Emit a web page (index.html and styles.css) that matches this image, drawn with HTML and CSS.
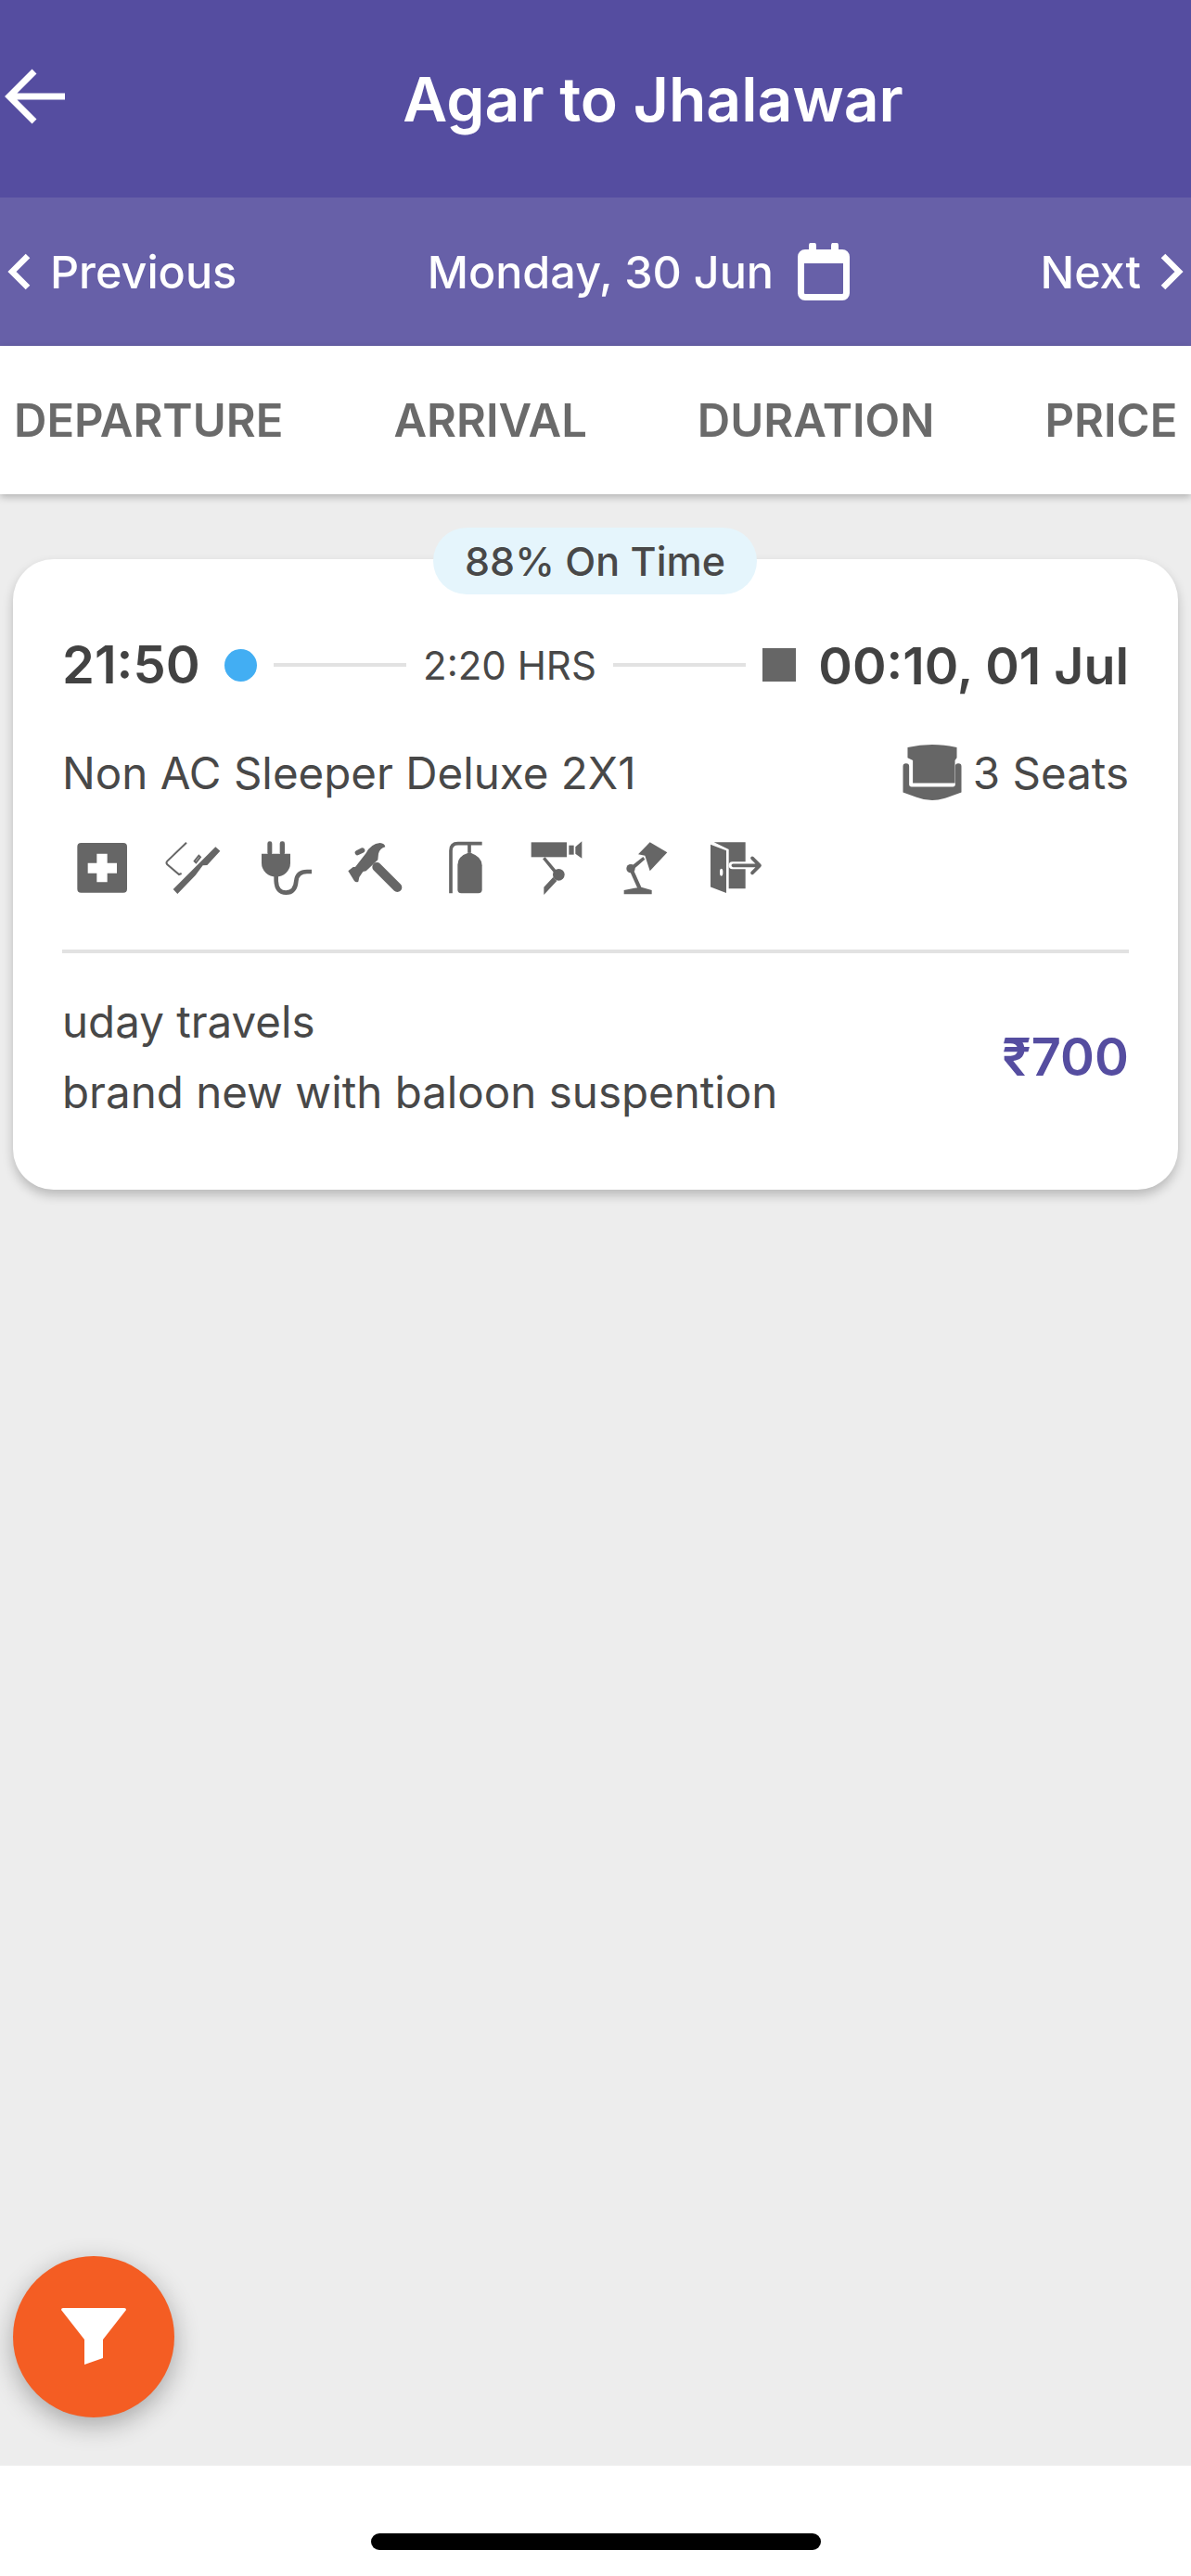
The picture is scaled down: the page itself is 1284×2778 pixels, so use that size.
FILE: index.html
```html
<!DOCTYPE html>
<html lang="en">
<head>
<meta charset="utf-8">
<title>Agar to Jhalawar</title>
<link rel="stylesheet" href="styles.css">
</head>
<body>
<div class="page">
  <header class="topbar">
    <svg class="back" viewBox="0 0 70 64"><path d="M34 5 7 32l27 27M8 32h59"/></svg>
    <h1 class="title">Agar to Jhalawar</h1>
  </header>
  <nav class="datebar">
    <a class="datebar-link"><svg class="chevron" viewBox="0 0 26 40"><path d="M22 3 5 20l17 17"/></svg>Previous</a>
    <span class="datebar-date">Monday, 30 Jun
      <svg class="calendar" viewBox="0 0 56 62"><path class="cal-fill" fill-rule="evenodd" d="M8 7h4V3a4 4 0 0 1 8 0v4h16V3a4 4 0 0 1 8 0v4h4a8 8 0 0 1 8 8v39a8 8 0 0 1-8 8H8a8 8 0 0 1-8-8V15a8 8 0 0 1 8-8Zm-1 15v32a1 1 0 0 0 1 1h40a1 1 0 0 0 1-1V22Z"/></svg>
    </span>
    <a class="datebar-link">Next<svg class="chevron" viewBox="0 0 26 40"><path d="M4 3l17 17L4 37"/></svg></a>
  </nav>
  <div class="tabs">
    <span class="tab">DEPARTURE</span>
    <span class="tab">ARRIVAL</span>
    <span class="tab">DURATION</span>
    <span class="tab">PRICE</span>
  </div>
  <main class="content">
    <article class="card">
      <span class="badge">88% On Time</span>
      <div class="times">
        <strong class="time time-dep">21:50</strong>
        <span class="dot"></span>
        <span class="line"></span>
        <span class="duration">2:20 HRS</span>
        <span class="line"></span>
        <span class="square"></span>
        <strong class="time">00:10, 01 Jul</strong>
      </div>
      <div class="bus-row">
        <span>Non AC Sleeper Deluxe 2X1</span>
        <span class="seats">
          <svg class="seat-icon" viewBox="100 68 190 187"><path d="M115 80q80-18 160 0v34l-6 8v74H132v-74l-17-8Z"/><path d="M100 142a10 10 0 0 1 20 0v58q0 8 8 8h134q8 0 8-8v-58a10 10 0 0 1 20 0v84l-44 16q-51 20-102 0l-44-16Z"/></svg>
          3 Seats
        </span>
      </div>
      <div class="amenities">
        <svg class="amenity" viewBox="58 78 180 180"><path fill-rule="evenodd" d="M80 87h137a12 12 0 0 1 12 12v137a12 12 0 0 1-12 12H80a12 12 0 0 1-12-12V99a12 12 0 0 1 12-12Zm51 35v30h-29v33h29v29h34v-29h31v-33h-31v-30Z"/></svg>
        <svg class="amenity" viewBox="352 78 180 180"><path d="M378 237 515 100l15 13-42 46-14 1-24 32-58 60Z"/><path d="M447 146l14-18 5 5-14 18ZM405 186l-8 3-38-32q-5-6 0-11l62-60" class="thin"/></svg>
        <svg class="amenity" viewBox="647 78 180 180"><rect x="684" y="82" width="15" height="44" rx="7"/><rect x="724" y="82" width="16" height="44" rx="7"/><path d="M665 122h93v30a46 44 0 0 1-93 0Z"/><path class="cord" d="M712 190v20q2 38 32 38 30 0 33-38 3-30 35-30h21"/></svg>
        <svg class="amenity" viewBox="938 78 180 180"><path class="handle" d="M1035 165l66 66"/><path d="M942 178l16-13h7l35-45q15-30 45-33 15 1 17 13-17 4-22 22l-2 20-38 36-10 2-12 18-3 14q-7 4-13-2Z"/><path class="cord thin-cord" d="M972 119l16-8"/></svg>
        <svg class="amenity" viewBox="32 78 180 180"><path d="M96 158q0-28 38-40 41 12 41 42v78q0 12-12 12h-55q-12 0-12-12Z"/><path class="neck" d="M74 250V112q0-23 23-23h78M134 89v30"/></svg>
        <svg class="amenity" viewBox="325 78 180 180"><rect x="333" y="85" width="115" height="48"/><rect x="455" y="95" width="16" height="30"/><path d="m476 100 21-18v55l-21-15Z"/><circle cx="422" cy="190" r="19"/><path d="m370 139 8-6 44 52-8 8ZM374 230l30-32 12 12-42 45Z"/></svg>
        <svg class="amenity" viewBox="624 78 180 180"><path d="m722 85 56 33-56 60-16-50-22-4Z"/><circle cx="660" cy="170" r="14"/><path d="m662 162 38-30 6 8-36 32ZM654 172l12-4 28 62-12 4Z"/><path d="M638 253v-13l34-7 22-3 34 10v13Z"/></svg>
        <svg class="amenity" viewBox="919 78 180 180"><path d="M930 85h102v150h-54V108Z"/><path fill-rule="evenodd" d="m918 92 52 20v137l-52-20Zm36 78q-5 0-5 8v8q0 8 5 8t5-8v-8q0-8-5-8Z"/><path class="arrow-gap" d="M990 160h44"/><path class="arrow" d="M992 160h82M1054 136l24 24-24 24"/></svg>
      </div>
      <hr class="divider">
      <div class="operator-row">
        <div class="operator">
          <p class="operator-line">uday travels</p>
          <p class="operator-line">brand new with baloon suspention</p>
        </div>
        <strong class="price">₹700</strong>
      </div>
    </article>
    <button class="fab" aria-label="Filter">
      <svg class="fab-icon" viewBox="0 0 70 62"><path d="M0 2Q0 0 2 0h66q2 0 2 2L45 34v20l-20 7V34Z"/></svg>
    </button>
  </main>
  <footer class="home-area"><span class="home-bar"></span></footer>
</div>
</body>
</html>
```
FILE: styles.css
```css
* { box-sizing: border-box; }
html, body { margin: 0; padding: 0; }
body { font-family: Inter, "Noto Sans", sans-serif; color: #484848; }
.page { display: flex; flex-direction: column; width: 1284px; height: 2778px; overflow: hidden; background: #ededed; }

.topbar { position: relative; flex: 0 0 213px; display: flex; align-items: center; justify-content: center; padding-left: 124px; background: #554da0; color: #fff; }
.back { position: absolute; left: 3px; top: 72px; width: 70px; height: 64px; fill: none; stroke: #fff; stroke-width: 7; }
.title { margin: 0; font-size: 66px; font-weight: 600; }

.datebar { flex: 0 0 160px; display: flex; align-items: center; justify-content: space-between; padding: 0 8px; background: #6760a8; color: #fff; font-size: 48.5px; font-weight: 500; }
.datebar-link { display: flex; align-items: center; gap: 20px; }
.datebar-date { display: flex; align-items: center; gap: 26px; }
.chevron { width: 26px; height: 40px; fill: none; stroke: #fff; stroke-width: 6.5; }
.calendar { width: 56px; height: 62px; }
.cal-fill { fill: #fff; }

.tabs { position: relative; z-index: 1; flex: 0 0 160px; display: flex; align-items: center; gap: 119px; padding: 0 15px; background: #fff; box-shadow: 0 3px 8px rgba(0,0,0,.25); color: #6a6a6a; font-size: 49px; font-weight: 600; white-space: nowrap; }

.content { position: relative; flex: 1; padding-top: 70px; }
.card { position: relative; margin: 0 14px; height: 680px; padding: 84px 53px 0; background: #fff; border-radius: 44px; box-shadow: 0 6px 12px rgba(0,0,0,.22); }
.badge { position: absolute; top: -34px; left: 453px; width: 349px; height: 72px; display: flex; align-items: center; justify-content: center; border-radius: 36px; background: #e5f5fc; font-size: 43px; font-weight: 500; color: #484848; }

.times { display: flex; align-items: center; height: 60px; }
.time { font-size: 55.5px; font-weight: 600; color: #424242; white-space: nowrap; }
.time-dep { font-size: 56px; }
.dot { flex: none; width: 35px; height: 35px; margin: 0 18px 0 26px; border-radius: 50%; background: #42aef3; }
.line { flex: 1; height: 4px; background: #e2e2e2; }
.duration { margin: 0 18px; font-size: 42px; white-space: nowrap; }
.square { flex: none; width: 36px; height: 36px; margin: 0 24px 0 18px; background: #666; }

.bus-row { display: flex; align-items: center; justify-content: space-between; height: 60px; margin-top: 56px; font-size: 47.5px; }
.seats { display: flex; align-items: center; gap: 12px; }
.seat-icon { width: 64px; height: 62px; fill: #666; }

.amenities { display: flex; gap: 38px; margin: 43px 0 0 13px; }
.amenity { flex: none; width: 60px; height: 60px; fill: #666; }
.amenity .thin { fill: none; stroke: #666; stroke-width: 6; }
.amenity .cord { fill: none; stroke: #666; stroke-width: 14; stroke-linecap: round; }
.amenity .thin-cord { stroke-width: 16; }
.amenity .handle { fill: none; stroke: #666; stroke-width: 30; stroke-linecap: round; }
.amenity .neck { fill: none; stroke: #666; stroke-width: 11; }
.amenity .arrow { fill: none; stroke: #666; stroke-width: 11; stroke-linecap: round; stroke-linejoin: round; }
.amenity .arrow-gap { fill: none; stroke: #fff; stroke-width: 24; stroke-linecap: round; }

.divider { height: 4px; margin: 58px 0 0; border: 0; background: #e2e2e2; }

.operator-row { display: flex; align-items: center; justify-content: space-between; margin-top: 36px; }
.operator-line { margin: 0; height: 76px; line-height: 76px; font-size: 47.5px; }
.price { font-size: 56px; font-weight: 600; color: #554da0; }

.fab { position: absolute; left: 14px; bottom: 52px; width: 174px; height: 174px; padding: 0; display: flex; align-items: center; justify-content: center; border: 0; border-radius: 50%; background: #f45d23; box-shadow: 0 8px 28px rgba(0,0,0,.3); }
.fab-icon { width: 70px; height: 62px; fill: #fff; }

.home-area { flex: 0 0 119px; display: flex; justify-content: center; padding-top: 73px; background: #fff; }
.home-bar { width: 485px; height: 18px; border-radius: 9px; background: #000; }
```
